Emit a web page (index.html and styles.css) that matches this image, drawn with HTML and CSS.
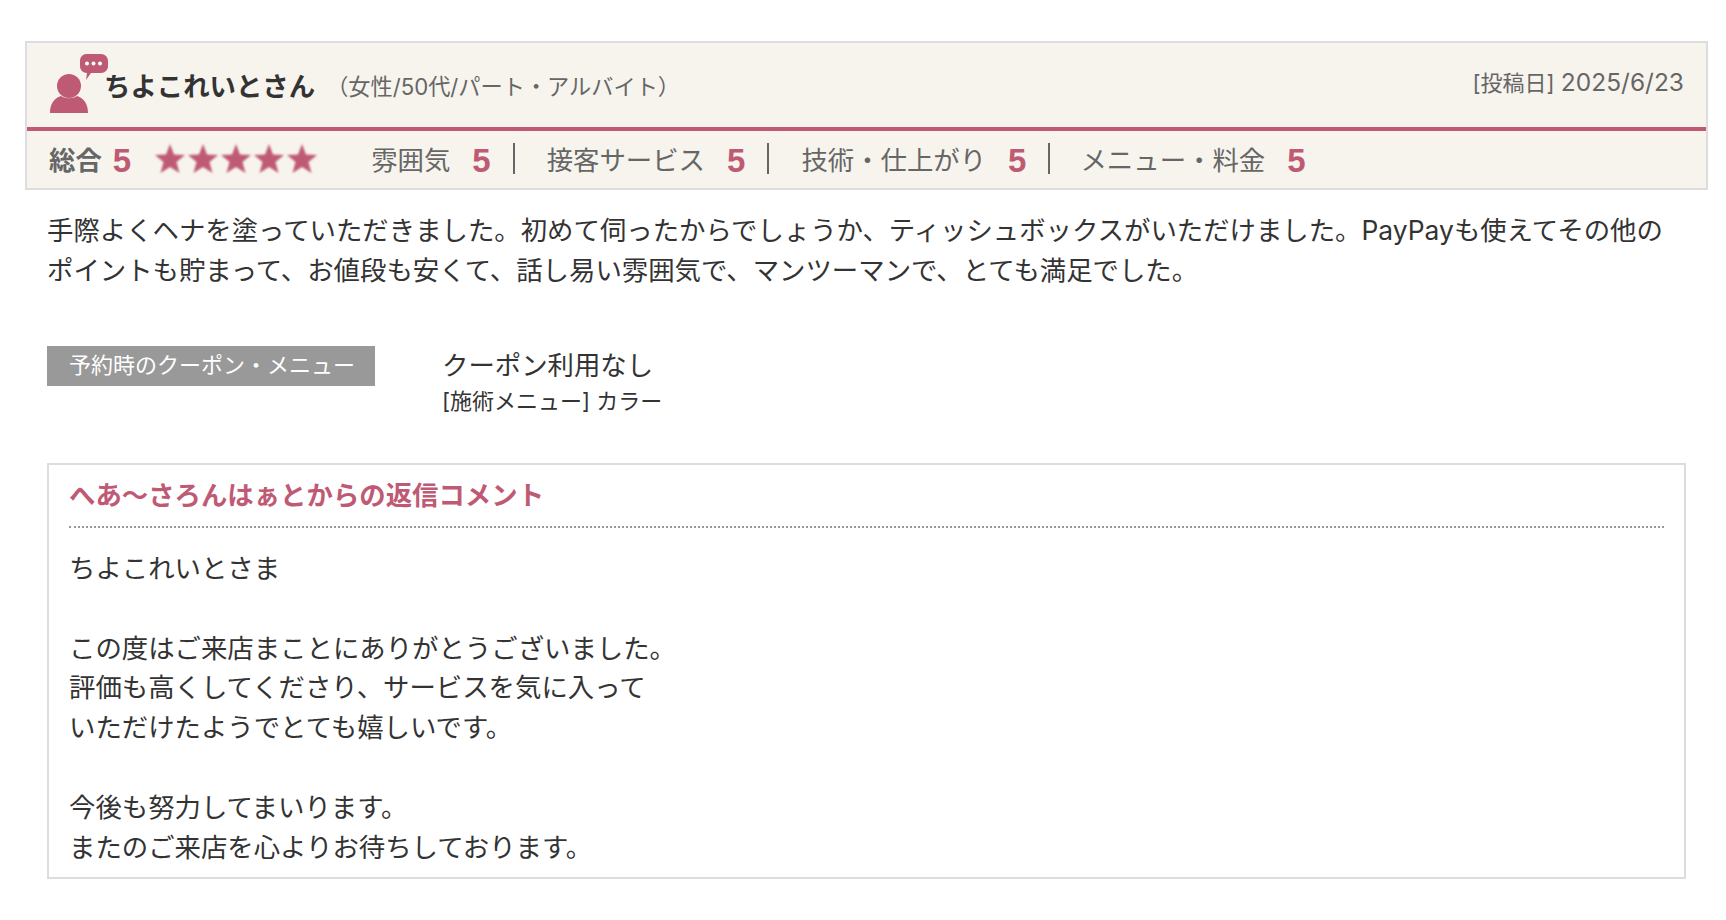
FILE: index.html
```html
<!DOCTYPE html>
<html lang="ja">
  <head>
    <meta charset="utf-8">
    <title>口コミ</title>
    <link rel="stylesheet" href="styles.css">
  </head>
  <body>
    <div class="review">
      <div class="review-box">
        <div class="review-head">
          <svg class="user-icon" width="58" height="60" viewBox="0 0 58 60">
            <circle cx="19" cy="32" r="12" fill="#bf5a75"/>
            <path d="M0 59c0-9 4-15 11-17 4 3 12 3 16 0 7 2 11 8 11 17z" fill="#bf5a75"/>
            <path d="M36 0h15c4 0 7 3 7 7v5c0 4-3 7-7 7h-10l-5 7 1-7c-4 0-7-3-7-7V7c0-4 3-7 6-7z" fill="#bf5a75"/>
            <circle cx="37" cy="9.500" r="2" fill="#fff"/>
            <circle cx="43.500" cy="9.500" r="2" fill="#fff"/>
            <circle cx="50" cy="9.500" r="2" fill="#fff"/>
          </svg>
          <span class="user-name">ちよこれいとさん</span>
          <span class="user-info">（女性/50代/パート・アルバイト）</span>
          <span class="post-date">[投稿日] <span class="date-num">2025/6/23</span></span>
        </div>
        <div class="rating-row">
          <span class="total-label">総合</span>
          <span class="score total-score">5</span>
          <svg class="stars" width="170" height="36" viewBox="0 0 170 36">
            <defs>
              <filter id="soft" x="-20%" y="-20%" width="140%" height="140%">
                <feGaussianBlur stdDeviation="1"/>
              </filter>
              <polygon id="star" points="17,3 21,13.500 32,14 23.500,21 26.500,32 17,26 7.500,32 10.500,21 2,14 13,13.500"/>
            </defs>
            <g fill="#bf5a75" filter="url(#soft)">
              <use href="#star"/>
              <use href="#star" x="33"/>
              <use href="#star" x="66"/>
              <use href="#star" x="99"/>
              <use href="#star" x="132"/>
            </g>
          </svg>
          <div class="rating-item first"><span>雰囲気</span><span class="score">5</span></div>
          <div class="rating-item"><span>接客サービス</span><span class="score">5</span></div>
          <div class="rating-item"><span>技術・仕上がり</span><span class="score">5</span></div>
          <div class="rating-item last"><span>メニュー・料金</span><span class="score">5</span></div>
        </div>
      </div>

      <p class="review-text">手際よくヘナを塗っていただきました。初めて伺ったからでしょうか、ティッシュボックスがいただけました。PayPayも使えてその他の<br>ポイントも貯まって、お値段も安くて、話し易い雰囲気で、マンツーマンで、とても満足でした。</p>

      <div class="coupon">
        <div class="coupon-label">予約時のクーポン・メニュー</div>
        <div class="coupon-body">
          <div class="coupon-name">クーポン利用なし</div>
          <div class="coupon-menu">[施術メニュー] カラー</div>
        </div>
      </div>

      <div class="reply">
        <div class="reply-title">へあ～さろんはぁとからの返信コメント</div>
        <p class="reply-text">ちよこれいとさま<br><br>この度はご来店まことにありがとうございました。<br>評価も高くしてくださり、サービスを気に入って<br>いただけたようでとても嬉しいです。<br><br>今後も努力してまいります。<br>またのご来店を心よりお待ちしております。</p>
      </div>
    </div>
  </body>
</html>
```

FILE: styles.css
```css
body {
  font-family: Inter, "Noto Sans CJK JP", sans-serif;
  color: #333;
  background-color: #fff;
  margin: 0;
  padding: 0;
}
.review {
  width: 1683px;
  margin: 41px 0 0 25px;
}
.review-box {
  border: 2px solid #ddd;
  background-color: #f7f4ee;
}
.review-head {
  display: flex;
  align-items: flex-start;
  height: 84px;
  padding-left: 23px;
  padding-right: 22px;
  border-bottom: 4px solid #bf5a75;
}
.user-icon {
  flex: none;
  margin-top: 11px;
  margin-right: -4px;
}
.user-name {
  font-size: 26.400px;
  font-weight: bold;
  line-height: 40px;
  margin-top: 23px;
}
.user-info {
  font-size: 22.200px;
  line-height: 40px;
  margin-top: 24px;
  margin-left: 11px;
  color: #666;
}
.post-date {
  font-size: 22px;
  line-height: 40px;
  margin-top: 19px;
  margin-left: auto;
  color: #666;
}
.date-num {
  font-size: 24.500px;
}
.rating-row {
  box-sizing: border-box;
  display: flex;
  align-items: center;
  height: 57px;
  padding-left: 22px;
  padding-bottom: 2px;
  font-size: 26.400px;
  color: #666;
}
.total-label {
  font-weight: bold;
}
.score {
  font-size: 33px;
  line-height: 31px;
  margin-top: 4px;
  font-weight: bold;
  color: #bf5a75;
  font-family: "Liberation Sans", sans-serif;
}
.total-score {
  margin-left: 11px;
}
.stars {
  flex: none;
  margin-left: 22px;
}
.rating-item {
  display: flex;
  align-items: center;
  gap: 22px;
  height: 31px;
  padding: 0 22px 0 32px;
  border-right: 2px solid #666;
}
.rating-item.first {
  margin-left: 16px;
}
.rating-item.last {
  padding-left: 30px;
  border-right: none;
}
.review-text {
  font-size: 26.400px;
  line-height: 40px;
  margin: 20px 0 0 22px;
  white-space: nowrap;
}
.coupon {
  display: flex;
  margin: 56px 0 0 22px;
}
.coupon-label {
  box-sizing: border-box;
  width: 328px;
  height: 40px;
  padding-left: 2px;
  line-height: 38px;
  text-align: center;
  font-size: 22px;
  color: #fff;
  background-color: #999;
}
.coupon-body {
  margin-left: 67px;
}
.coupon-name {
  font-size: 26.400px;
  line-height: 38px;
}
.coupon-menu {
  font-size: 22px;
  line-height: 34px;
}
.reply {
  box-sizing: border-box;
  width: 1639px;
  height: 416px;
  margin: 45px 0 0 22px;
  padding: 0 20px;
  border: 2px solid #ddd;
}
.reply-title {
  font-size: 26.400px;
  font-weight: bold;
  line-height: 40px;
  height: 63px;
  padding-top: 10px;
  box-sizing: border-box;
  color: #bf5a75;
  border-bottom: 2px dotted #999;
}
.reply-text {
  font-size: 26.400px;
  line-height: 39.800px;
  margin: 21px 0 0 0;
}
```
